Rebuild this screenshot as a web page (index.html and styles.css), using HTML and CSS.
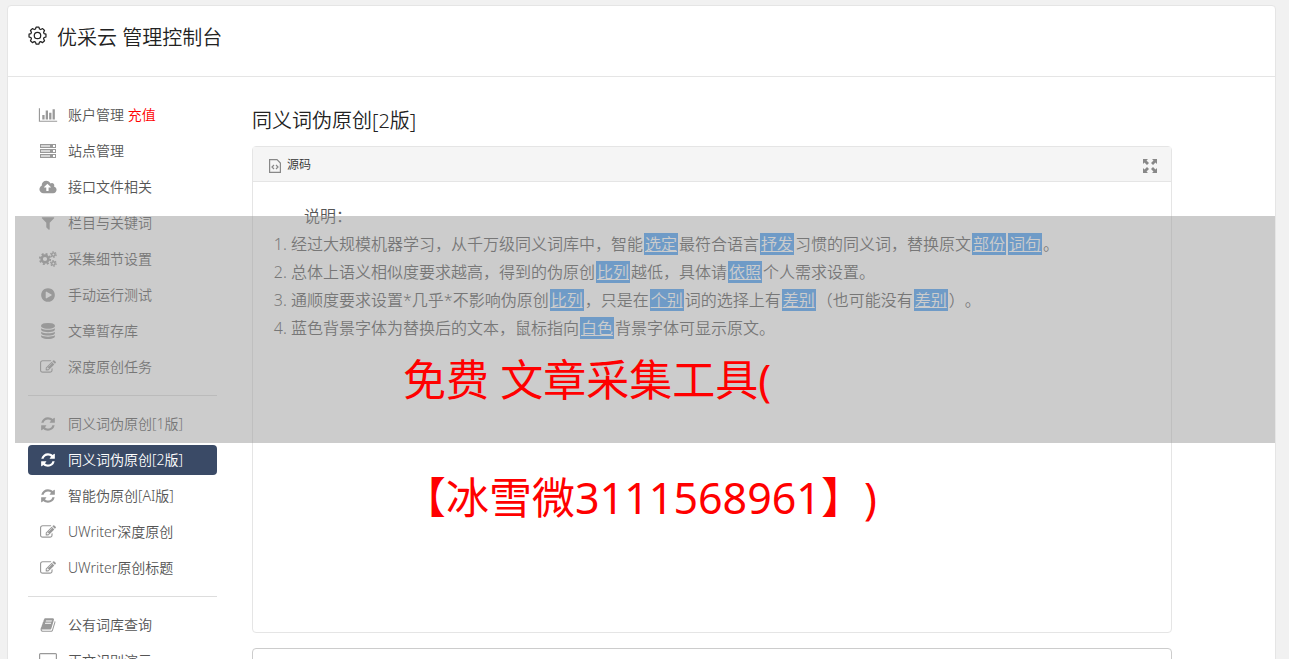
FILE: index.html
```html
<!DOCTYPE html>
<html lang="zh-CN">
<head>
  <meta charset="UTF-8">
  <title>优采云 管理控制台</title>
  <meta name="viewport" content="width=device-width, initial-scale=1.0">
  <link rel="stylesheet" href="styles.css">
</head>
<body>

  <!-- shared icons -->
  <svg class="sprite" aria-hidden="true">
    <symbol id="i-chart" viewBox="0 0 2048 1792"><path d="M640 896v512h-256v-512h256zm384-512v1024h-256v-1024h256zm1024 1152v128h-2048v-1536h128v1408h1920zm-640-896v768h-256v-768h256zm384-384v1152h-256v-1152h256z"/></symbol>
    <symbol id="i-server" viewBox="0 0 16 16"><path d="M1 2h9v2H1zM1 7h9v2H1zM1 12h9v2H1z" opacity=".4"/><path fill-rule="evenodd" d="M0 1h16v4H0zM1 2v2h9V2zM13 2v2h2V2zM0 6h16v4H0zM1 7v2h9V7zM13 7v2h2V7zM0 11h16v4H0zM1 12v2h9v-2zM13 12v2h2v-2z"/></symbol>
    <symbol id="i-cloud" viewBox="0 0 1920 1792"><path d="M1280 928q0-14-9-23l-352-352q-9-9-23-9t-23 9l-351 351q-10 12-10 24 0 14 9 23t23 9h224v352q0 13 9.500 22.500t22.500 9.500h192q13 0 22.500-9.500t9.500-22.500v-352h224q13 0 22.500-9.500t9.500-22.500zm640 288q0 159-112.500 271.500t-271.500 112.500h-1088q-185 0-316.500-131.500t-131.500-316.500q0-130 70-240t188-165q-2-30-2-43 0-212 150-362t362-150q156 0 285.500 87t188.500 231q71-62 166-62 106 0 181 75t75 181q0 76-41 138 130 31 213.500 135.500t83.500 238.500z"/></symbol>
    <symbol id="i-filter" viewBox="0 0 1792 1792"><path d="M1595 295q17 41-14 70l-493 493v742q0 42-39 59-13 5-25 5-27 0-45-19l-256-256q-19-19-19-45v-486l-493-493q-31-29-14-70 17-39 59-39h1280q42 0 59 39z"/></symbol>
    <symbol id="i-cogs" viewBox="0 0 18 16">
      <g fill="none" stroke="currentColor">
        <circle cx="6" cy="8" r="3.400" stroke-width="2.600"/>
        <circle cx="6" cy="8" r="5.200" stroke-width="1.800" stroke-dasharray="2.040 2.040"/>
        <circle cx="14.400" cy="3.600" r="1.700" stroke-width="1.400"/>
        <circle cx="14.400" cy="3.600" r="2.800" stroke-width="1.200" stroke-dasharray="1.470 1.460"/>
        <circle cx="14.400" cy="12.400" r="1.700" stroke-width="1.400"/>
        <circle cx="14.400" cy="12.400" r="2.800" stroke-width="1.200" stroke-dasharray="1.470 1.460"/>
      </g>
    </symbol>
    <symbol id="i-play" viewBox="0 0 1792 1792"><path d="M896 128q209 0 385.500 103t279.500 279.500 103 385.500-103 385.500-279.500 279.500-385.500 103-385.500-103-279.500-279.500-103-385.500 103-385.500 279.500-279.500 385.500-103zm384 823q32-18 32-55t-32-55l-544-320q-31-19-64-1-32 19-32 56v640q0 37 32 56 16 8 32 8 17 0 32-9z"/></symbol>
    <symbol id="i-db" viewBox="0 0 1792 1792"><path d="M896 768q237 0 443-43t325-127v170q0 69-103 128t-280 93.500-385 34.500-385-34.500-280-93.500-103-128v-170q119 84 325 127t443 43zm0 768q237 0 443-43t325-127v170q0 69-103 128t-280 93.500-385 34.500-385-34.500-280-93.500-103-128v-170q119 84 325 127t443 43zm0-384q237 0 443-43t325-127v170q0 69-103 128t-280 93.500-385 34.500-385-34.500-280-93.500-103-128v-170q119 84 325 127t443 43zm0-1152q208 0 385 34.500t280 93.500 103 128v128q0 69-103 128t-280 93.500-385 34.500-385-34.500-280-93.500-103-128v-128q0-69 103-128t280-93.500 385-34.500z"/></symbol>
    <symbol id="i-edit" viewBox="0 0 1792 1792"><path d="M888 1184l116-116-152-152-116 116v56h96v96h56zm440-720q-16-16-33 1l-350 350q-17 17-1 33t33-1l350-350q17-17 1-33zm80 594v190q0 119-84.500 203.500t-203.500 84.500h-832q-119 0-203.500-84.500t-84.500-203.500v-832q0-119 84.500-203.500t203.500-84.500h832q63 0 117 25 15 7 18 23 3 17-9 29l-49 49q-14 14-32 8-23-6-45-6h-832q-66 0-113 47t-47 113v832q0 66 47 113t113 47h832q66 0 113-47t47-113v-126q0-13 9-22l64-64q15-15 35-7t20 29zm-96-738l288 288-672 672h-288v-288zm444 132l-92 92-288-288 92-92q28-28 68-28t68 28l152 152q28 28 28 68t-28 68z"/></symbol>
    <symbol id="i-refresh" viewBox="0 0 1792 1792"><path d="M1639 1056q0 5-1 7-64 268-268 434.500t-478 166.500q-146 0-282.500-55t-243.500-157l-129 129q-19 19-45 19t-45-19-19-45v-448q0-26 19-45t45-19h448q26 0 45 19t19 45-19 45l-137 137q71 66 161 102t187 36q134 0 250-65t186-179q11-17 53-117 8-23 30-23h192q13 0 22.500 9.500t9.500 22.500zm25-800v448q0 26-19 45t-45 19h-448q-26 0-45-19t-19-45 19-45l138-138q-148-137-349-137-134 0-250 65t-186 179q-11 17-53 117-8 23-30 23h-199q-13 0-22.500-9.500t-9.500-22.500v-7q65-268 270-434.500t480-166.500q146 0 284 55.500t245 156.500l130-129q19-19 45-19t45 19 19 45z"/></symbol>
    <symbol id="i-book" viewBox="0 0 1792 1792"><path d="M1703 478q40 57 18 129l-275 906q-19 64-76.500 107.500t-122.500 43.500h-923q-77 0-148.500-53.500t-99.500-131.500q-24-67-2-127 0-4 3-27t4-37q1-8-3-21.500t-3-19.500q2-11 8-21t16.500-23.500 16.500-23.500q23-38 45-91.500t30-91.500q3-10 .5-30t-.5-28q3-11 17-28t17-23q21-36 42-92t25-90q1-9-2.500-32t.5-28q4-13 22-30.500t22-22.500q19-26 42.500-84.500t27.500-96.500q1-8-3-25.500t-2-26.500q2-8 9-18t18-23 17-21q8-12 16.500-30.500t15-35 16-36 19.500-32 26.500-23.500 36-11.500 47.500 5.500l-1 3q38-9 51-9h761q74 0 114 56t18 130l-274 906q-36 119-71.500 153.500t-128.500 34.500h-869q-27 0-38 15-11 16-1 43 24 70 144 70h923q29 0 56-15.500t35-41.500l300-987q7-22 5-57 38 15 59 43zm-1064 2q-4 13 2 22.500t20 9.500h608q13 0 25.500-9.500t16.500-22.500l21-64q4-13-2-22.500t-20-9.500h-608q-13 0-25.500 9.500t-16.500 22.500zm-83 256q-4 13 2 22.500t20 9.500h608q13 0 25.500-9.500t16.500-22.500l21-64q4-13-2-22.500t-20-9.500h-608q-13 0-25.500 9.500t-16.500 22.500z"/></symbol>
    <symbol id="i-desktop" viewBox="0 0 18 16"><path fill-rule="evenodd" d="M1.500 0h15A1.500 1.500 0 0 1 18 1.500v10a1.500 1.500 0 0 1-1.500 1.500H11v2h2v1H5v-1h2v-2H1.500A1.500 1.500 0 0 1 0 11.500v-10A1.500 1.500 0 0 1 1.500 0zM1.200 1.200v9h15.600v-9z"/></symbol>
  </svg>

  <div class="card">
    <header class="header">
      <svg class="gear" viewBox="0 0 20 20" fill="none" stroke="currentColor" stroke-width="1.300" stroke-linejoin="round">
        <path d="M8.500 1.200h3l.6 2 1.300.5 2-1 2 2-1 2 .5 1.300 2 .6v3l-2 .6-.5 1.300 1 2-2 2-2-1-1.300.5-.6 2h-3l-.6-2-1.300-.5-2 1-2-2 1-2-.5-1.300-2-.6v-3l2-.6.5-1.300-1-2 2-2 2 1 1.300-.5z"/>
        <circle cx="10" cy="10" r="3.400"/>
      </svg>
      <h1>优采云 管理控制台</h1>
    </header>

    <div class="layout">
      <nav class="sidebar">
        <a href="#"><svg><use href="#i-chart"/></svg><span>账户管理 <b>充值</b></span></a>
        <a href="#"><svg><use href="#i-server"/></svg><span>站点管理</span></a>
        <a href="#"><svg><use href="#i-cloud"/></svg><span>接口文件相关</span></a>
        <a href="#"><svg><use href="#i-filter"/></svg><span>栏目与关键词</span></a>
        <a href="#"><svg><use href="#i-cogs"/></svg><span>采集细节设置</span></a>
        <a href="#"><svg><use href="#i-play"/></svg><span>手动运行测试</span></a>
        <a href="#"><svg><use href="#i-db"/></svg><span>文章暂存库</span></a>
        <a href="#"><svg><use href="#i-edit"/></svg><span>深度原创任务</span></a>
        <hr>
        <a href="#"><svg><use href="#i-refresh"/></svg><span>同义词伪原创[1版]</span></a>
        <a href="#" class="active"><svg><use href="#i-refresh"/></svg><span>同义词伪原创[2版]</span></a>
        <a href="#"><svg><use href="#i-refresh"/></svg><span>智能伪原创[AI版]</span></a>
        <a href="#"><svg><use href="#i-edit"/></svg><span>UWriter深度原创</span></a>
        <a href="#"><svg><use href="#i-edit"/></svg><span>UWriter原创标题</span></a>
        <hr>
        <a href="#"><svg><use href="#i-book"/></svg><span>公有词库查询</span></a>
        <a href="#"><svg><use href="#i-desktop"/></svg><span>正文识别演示</span></a>
      </nav>

      <main class="content">
        <h2>同义词伪原创[2版]</h2>

        <section class="editor">
          <div class="toolbar">
            <button type="button" class="source-btn">
              <svg viewBox="0 0 12 14" fill="none" stroke="currentColor" stroke-width="1.200">
                <path d="M.6.600h7.400l3.400 3.400v9.400H.6z"/>
                <path d="M5 6L3 8l2 2M7 6l2 2-2 2"/>
              </svg>
              源码
            </button>
            <button type="button" class="expand-btn" aria-label="全屏">
              <svg viewBox="0 0 14 14" fill="currentColor">
                <path d="M0 0h5L3.500 1.500 6 4 4 6 1.500 3.500 0 5z"/>
                <path d="M14 0H9l1.500 1.500L8 4l2 2 2.500-2.500L14 5z"/>
                <path d="M0 14h5l-1.500-1.500L6 10 4 8l-2.500 2.500L0 9z"/>
                <path d="M14 14H9l1.500-1.500L8 10l2-2 2.500 2.500L14 9z"/>
              </svg>
            </button>
          </div>
          <div class="editor-body">
            <p>说明：</p>
            <ol>
              <li>经过大规模机器学习，从千万级同义词库中，智能<mark>选定</mark>最符合语言<mark>抒发</mark>习惯的同义词，替换原文<mark>部份</mark><mark>词句</mark>。</li>
              <li>总体上语义相似度要求越高，得到的伪原创<mark>比列</mark>越低，具体请<mark>依照</mark>个人需求设置。</li>
              <li>通顺度要求设置*几乎*不影响伪原创<mark>比列</mark>，只是在<mark>个别</mark>词的选择上有<mark>差别</mark>（也可能没有<mark>差别</mark>）。</li>
              <li>蓝色背景字体为替换后的文本，鼠标指向<mark>白色</mark>背景字体可显示原文。</li>
            </ol>
          </div>
        </section>

        <section class="result"></section>
      </main>
    </div>
  </div>

  <div class="band"></div>
  <div class="caption">
    <p>免费 文章采集工具(</p>
    <p>【冰雪微3111568961】)</p>
  </div>

</body>
</html>
```

FILE: styles.css
```css
* {
  box-sizing: border-box;
}

body {
  position: relative;
  height: 100vh;
  margin: 0;
  padding: 5px 13px 0 7px;
  overflow: hidden;
  background: #f1f1f1;
  color: #222;
  font-family: "Noto Sans", "Noto Sans CJK SC", sans-serif;
  font-size: 14px;
  font-weight: 350;
  text-spacing-trim: space-all;
}

.sprite {
  display: none;
}

h1, h2, p, ol {
  margin: 0;
  padding: 0;
  font-weight: inherit;
}

.card {
  background: #fff;
  border: 1px solid #e5e5e5;
  border-radius: 4px;
}

.header {
  display: flex;
  align-items: center;
  gap: 10px;
  padding: 17px 20px 23px;
  border-bottom: 1px solid #e5e5e5;
}

.header h1 {
  font-size: 20px;
  line-height: 30px;
}

.gear {
  width: 19px;
  height: 19px;
  margin-bottom: 6px;
}

.layout {
  display: grid;
  grid-template-columns: 189px 1fr;
  gap: 35px;
  padding: 23px 103px 0 20px;
}

.sidebar {
  display: flex;
  flex-direction: column;
  gap: 6px;
}

.sidebar a {
  display: flex;
  align-items: center;
  gap: 10px;
  height: 30px;
  padding: 0 10px;
  border-radius: 4px;
  color: #555;
  text-decoration: none;
  white-space: nowrap;
}

.sidebar span {
  padding-bottom: 2px;
}

.sidebar svg {
  width: 20px;
  height: 16px;
  color: #999;
  fill: #999;
}

.sidebar b {
  color: #f00;
  font-weight: inherit;
}

.sidebar .active {
  background: #3a4a66;
  color: #fff;
}

.sidebar .active svg {
  fill: #fff;
}

.sidebar hr {
  width: 100%;
  margin: 7px 0;
  border: 0;
  border-top: 1px solid #ddd;
}

.content h2 {
  padding: 6px 0 10px;
  font-size: 20px;
  line-height: 30px;
}

.editor {
  border: 1px solid #e5e5e5;
  border-radius: 4px;
}

.toolbar {
  display: flex;
  align-items: center;
  justify-content: space-between;
  height: 35px;
  padding: 0 14px 0 16px;
  background: #f5f5f5;
  border-bottom: 1px solid #e5e5e5;
}

.toolbar button {
  display: flex;
  align-items: center;
  gap: 6px;
  padding: 0;
  border: 0;
  background: none;
  color: #333;
  font: inherit;
  font-size: 12px;
  cursor: pointer;
}

.toolbar svg {
  margin-top: 3px;
  color: #888;
}

.source-btn svg {
  width: 12px;
  height: 14px;
}

.expand-btn svg {
  width: 14px;
  height: 14px;
}

.editor-body {
  min-height: 450px;
  padding: 20px 19px;
  color: #555;
  font-size: 16px;
  line-height: 28px;
}

.editor-body p {
  text-indent: 2em;
}

.editor-body ol {
  padding-left: 19px;
}

.editor-body mark {
  margin: 0 1px;
  padding: 0 1px;
  background: #459df5;
  color: #fff;
  text-decoration: underline;
}

.result {
  height: 60px;
  margin-top: 15px;
  border: 1px solid #ccc;
  border-radius: 4px;
}

/* grey strip laid over the page, with the red caption on top */
.band {
  position: absolute;
  top: 216px;
  left: 15px;
  right: 14px;
  height: 227px;
  background: rgba(153, 153, 153, 0.5);
}

.caption {
  position: absolute;
  top: 321px;
  left: 403px;
  color: #f00;
  font-size: 43px;
  font-weight: 400;
  line-height: 118px;
  white-space: nowrap;
}
```
